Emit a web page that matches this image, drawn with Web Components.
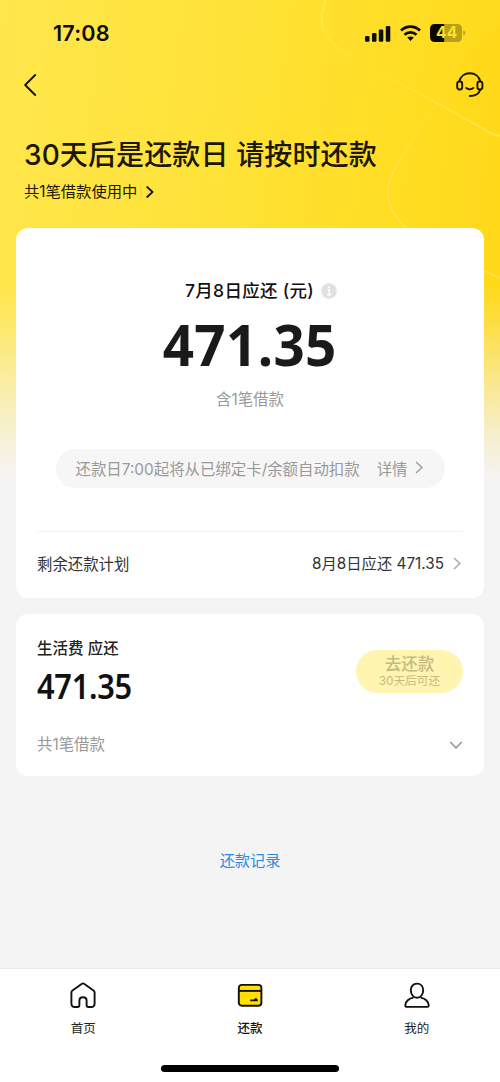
<!DOCTYPE html>
<html lang="zh-CN">
<head>
<meta charset="utf-8">
<title>还款</title>
<style>
html,body{margin:0;padding:0}
body{font-family:Inter,"Noto Sans CJK SC",sans-serif;color:#1a1a1a;background:#f4f4f4}
</style>
</head>
<body>
<repay-page></repay-page>
<script>
const define = (name, html) => {
  const t = document.createElement('template');
  t.innerHTML = html;
  customElements.define(name, class extends HTMLElement {
    constructor() {
      super();
      this.attachShadow({mode: 'open'}).append(t.content.cloneNode(true));
    }
  });
};

define('status-bar', `
<style>
:host{display:flex;height:66px;align-items:center;justify-content:space-between;padding:0 34px 0 53px;box-sizing:border-box;color:#0f0c00}
.time{font-size:21.6px;font-weight:600;line-height:26px;letter-spacing:.2px}
svg{display:block}
.icons{display:flex;align-items:center;gap:9px}
.battery{position:relative;width:36px;height:18px;display:flex}
.battery span{position:absolute;left:6px;top:0;font-size:15.500px;line-height:18.500px;font-weight:700;color:#ffe02a;letter-spacing:.2px}
</style>
<span class="time">17:08</span>
<div class="icons">
<svg width="26" height="17" viewBox="0 0 26 17" fill="#0f0c00"><rect x="0" y="11" width="4.5" height="5.7" rx="1.2"/><rect x="7" y="8" width="4.5" height="8.7" rx="1.2"/><rect x="13.8" y="4.5" width="4.5" height="12.2" rx="1.2"/><rect x="20.8" y="1" width="4.5" height="15.7" rx="1.2"/></svg>
<svg width="21" height="16" viewBox="0 0 21 16" fill="none" stroke="#0f0c00" stroke-width="2.8"><path d="M1 5.6C6.3.4 14.7.4 20 5.6"/><path d="M4.500 9.700c3.400-3.200 8.600-3.200 12 0"/><path d="M7.200 12.600c2-1.600 4.600-1.600 6.600 0L10.500 16z" fill="#0f0c00" stroke="none"/></svg>
<div class="battery">
<svg width="36" height="18" viewBox="0 0 36 18"><path d="M5 0H14.500V18H5Q0 18 0 13V5Q0 0 5 0Z" fill="#0b0800"/><path d="M14.500 0H27Q32 0 32 5V13Q32 18 27 18H14.500Z" fill="#b6a01c"/><path d="M33.300 6.500q2 .8 2 2.500t-2 2.500z" fill="#b6a01c"/></svg>
<span>44</span></div>
</div>`);

define('nav-bar', `
<style>
:host{display:flex;height:38px;align-items:center;justify-content:space-between;padding:0 16px 0 23px;box-sizing:border-box}
svg{display:block}
</style>
<svg width="15" height="24" viewBox="0 0 15 24" fill="none" stroke="#181400" stroke-width="1.9" stroke-linecap="round" stroke-linejoin="round"><path d="M12.200 2L2.200 12l10 10"/></svg>
<svg width="28" height="26" viewBox="0 0 28 26" fill="none" stroke="#181400" stroke-width="1.9" stroke-linecap="round"><rect x="1.200" y="9.500" width="5" height="8" rx="2.200"/><rect x="21.400" y="9.500" width="5" height="8" rx="2.200"/><path d="M3.400 9.300C4.500 4.400 8.600 1.300 13.800 1.300S23.100 4.400 24.200 9.300M24.200 17.700c-1.200 4-4.800 6.300-10.400 6.300M10.200 15.900c1.700 1.900 5.500 1.900 7.200 0"/></svg>`);

define('page-hero', `
<style>
:host{display:block;height:124px;padding:32px 24px 0;box-sizing:border-box;color:#1c1700}
h1{margin:0;font-size:28px;line-height:38px;font-weight:500;white-space:nowrap;letter-spacing:.12px}
p{margin:7px 0 0;display:flex;align-items:center;gap:9px;font-size:15.300px;line-height:22px}
</style>
<h1><slot name="title"></slot></h1>
<p><slot></slot><svg width="8" height="12" viewBox="0 0 8 12" fill="none" stroke="#1c1700" stroke-width="1.800" stroke-linecap="round" stroke-linejoin="round"><path d="M1.200 1l5.300 5-5.300 5"/></svg></p>`);

define('ui-card', `
<style>:host{display:block;background:#fff;border-radius:12px;margin:0 16px 16px;box-sizing:border-box}</style><slot></slot>`);

define('due-summary', `
<style>
:host{display:flex;flex-direction:column;align-items:center;height:303px;box-sizing:border-box;padding-top:50px}
.label{display:flex;align-items:center;gap:7px;font-size:17.500px;line-height:26px;font-weight:500;color:#111;margin-left:22px;white-space:nowrap;letter-spacing:.28px}
.amount{font-family:"Noto Sans",sans-serif;font-weight:700;font-size:57px;line-height:60px;letter-spacing:.4px;transform:scaleX(.96);margin-top:10px;color:#1a1a1a}
.sub{font-size:15.400px;line-height:22px;color:#999;margin-top:15px}
.notice{display:flex;align-items:center;width:389px;height:39px;border-radius:20px;background:#f6f6f6;box-sizing:border-box;margin-top:38px;padding:0 22px 2px 20px;font-size:15.420px;color:#999;white-space:nowrap}
.more{display:flex;align-items:center;gap:7px;margin-left:auto}
</style>
<div class="label"><span>7月8日应还 (元)</span><svg width="16" height="16" viewBox="0 0 16 16"><circle cx="8" cy="8" r="7.800" fill="#e1e1e1"/><path d="M6.500 6.800h1.700v4.700M6 11.800h4.200" stroke="#fff" stroke-width="1.500" fill="none"/><circle cx="8" cy="4.200" r="1" fill="#fff"/></svg></div>
<div class="amount">471.35</div>
<div class="sub">含1笔借款</div>
<div class="notice"><span>还款日7:00起将从已绑定卡/余额自动扣款</span><span class="more">详情<svg width="8" height="13" viewBox="0 0 8 13" fill="none" stroke="#999" stroke-width="1.300"><path d="M1 1l6 5.500L1 12"/></svg></span></div>`);

define('plan-row', `
<style>
:host{display:flex;margin:0 21px;height:67px;box-sizing:border-box;border-top:1px solid #f2f2f2;align-items:center;justify-content:space-between;padding:0 2px 5px 0;font-size:15.400px;color:#333}
.v{display:flex;align-items:center;gap:9px;font-size:15.300px;margin-top:-1px}
svg{position:relative;top:1px}
</style>
<span><slot></slot></span><span class="v"><slot name="value"></slot><svg width="8" height="13" viewBox="0 0 8 13" fill="none" stroke="#aaa" stroke-width="1.500"><path d="M1 1l5.800 5.500L1 12"/></svg></span>`);

define('loan-item', `
<style>
:host{display:flex;flex-direction:column;justify-content:space-between;height:162px;box-sizing:border-box;padding:24px 21px 20px}
.top,.foot{display:flex;justify-content:space-between;align-items:center}
.name{font-size:15.400px;line-height:22px;font-weight:500;color:#222;letter-spacing:.1px}
.num{font-family:"Noto Sans",sans-serif;font-weight:600;font-size:34px;line-height:40px;letter-spacing:-.3px;transform:scaleX(.905);transform-origin:0 50%;margin-top:6px;color:#111}
.btn{width:107px;height:43px;margin-top:-1px;border-radius:22px;background:#fff4b0;display:flex;flex-direction:column;align-items:center;color:#c4bb80}
.btn b{font-size:16.500px;line-height:20px;font-weight:500;margin-top:4px}
.btn i{font-style:normal;font-size:11.700px;line-height:14px}
.foot{font-size:15.400px;line-height:22px;color:#999}
</style>
<div class="top"><div><div class="name">生活费 应还</div><div class="num">471.35</div></div>
<div class="btn"><b>去还款</b><i>30天后可还</i></div></div>
<div class="foot"><span>共1笔借款</span><svg width="14" height="8" viewBox="0 0 14 8" fill="none" stroke="#999" stroke-width="1.600"><path d="M1.200 1L7 6.800l5.800-5.800"/></svg></div>`);

define('tab-item', `
<style>
:host{display:flex;flex:1;flex-direction:column;align-items:center;padding-top:13px;font-size:12.500px;color:#222}
.icon{height:26px}
.txt{line-height:18px;margin-top:12px}
:host([active]) .txt{font-weight:500;color:#111}
</style><div class="icon"><slot name="icon"></slot></div><div class="txt"><slot></slot></div>`);

define('tab-bar', `
<style>
:host{display:flex;flex-direction:column;justify-content:space-between;height:114px;background:#fff;border-top:1px solid #ebebeb;box-sizing:border-box}
.tabs{display:flex}
svg{display:block}
.home{width:178px;height:7px;border-radius:4px;background:#000;margin:0 auto 10px}
</style>
<div class="tabs">
<tab-item><svg slot="icon" width="26" height="26" viewBox="0 0 26 26" fill="none" stroke="#111" stroke-width="1.900" stroke-linejoin="round"><path d="M11.600 1.900Q13 .9 14.400 1.900L23.500 8.500Q24.600 9.300 24.600 10.600V21.500Q24.600 25 21.200 25H18.500Q16.600 25 16.600 23V18.300Q16.600 15.300 13 15.300T9.400 18.300V23Q9.400 25 7.500 25H4.800Q1.400 25 1.400 21.500V10.600Q1.400 9.300 2.500 8.500Z"/></svg>首页</tab-item>
<tab-item active><svg slot="icon" width="26" height="26" viewBox="0 0 26 26" fill="#ffe000" stroke="#111" stroke-width="1.900"><rect x="1.800" y="2.900" width="22.600" height="20.900" rx="3"/><path d="M2 8.900h22.300"/><path d="M13.200 17.500h3.700l2.300-2 .5 1.600 1 .4v1.700h-7.500z" fill="#111" stroke="none"/></svg>还款</tab-item>
<tab-item><svg slot="icon" width="26" height="26" viewBox="0 0 26 26" fill="none" stroke="#111" stroke-width="1.900"><path d="M13 1.600c4 0 6.200 2.900 6.200 6.600 0 4.100-2.500 7.600-6.200 7.600s-6.200-3.500-6.200-7.600C6.800 4.500 9 1.600 13 1.600Z"/><path d="M9.500 15.600C5 16.200 1.500 19.400 1.300 23c-.1 1.300.6 1.900 2 1.900h19.400c1.400 0 2.100-.6 2-1.900-.2-3.600-3.700-6.800-8.200-7.400"/></svg>我的</tab-item>
</div>
<div class="home"></div>`);

define('repay-page', `
<style>
:host{display:flex;flex-direction:column;position:relative;z-index:0;width:500px;height:1082px;overflow:hidden;background:#f4f4f4}
.bg{position:absolute;z-index:-1;left:0;top:0;width:500px;height:490px;background:
linear-gradient(180deg,rgba(244,244,244,0) 285px,rgba(244,244,244,.2) 325px,rgba(244,244,244,.55) 385px,rgba(244,244,244,.82) 435px,#f4f4f4 478px),
linear-gradient(98deg,#ffe74d 0%,#ffe339 40%,#ffdd22 75%,#ffd817 100%)}
.bg svg{display:block}
.link{margin:58px auto 0;font-size:15.200px;line-height:22px;color:#2b8be0}
tab-bar{margin-top:auto}
</style>
<div class="bg"><svg width="500" height="300" viewBox="0 0 500 300" fill="none"><defs>
<linearGradient id="a" x1="320" y1="0" x2="500" y2="137" gradientUnits="userSpaceOnUse"><stop stop-color="#fff17a" stop-opacity=".45"/><stop offset=".35" stop-color="#fff17a" stop-opacity=".05"/><stop offset="1" stop-color="#fff17a" stop-opacity=".6"/></linearGradient>
<linearGradient id="b" x1="500" y1="25" x2="387" y2="200" gradientUnits="userSpaceOnUse"><stop stop-color="#ffe95a" stop-opacity=".08"/><stop offset=".5" stop-color="#ffe95a" stop-opacity=".12"/><stop offset="1" stop-color="#fff07a" stop-opacity=".5"/></linearGradient>
<linearGradient id="c" x1="500" y1="40" x2="430" y2="110" gradientUnits="userSpaceOnUse"><stop stop-color="#ffd000" stop-opacity=".12"/><stop offset="1" stop-color="#ffd000" stop-opacity="0.02"/></linearGradient></defs>
<path d="M500 25Q477 33 463 55L438 102 484 129Q492 135 500 136Z" fill="url(#c)"/>
<path d="M326 0C318 20 321 34 337 47C348 56 390 79 415 91L484 129Q492 135 500 136" stroke="url(#a)" stroke-width="1.700"/>
<path d="M500 25Q477 33 463 55C452 76 442 98 427 118Q412 139 397 165C382 188 386 209 406 228L480 269 500 278" stroke="url(#b)" stroke-width="1.700"/></svg></div>
<status-bar></status-bar>
<nav-bar></nav-bar>
<page-hero><span slot="title">30天后是还款日 请按时还款</span>共1笔借款使用中</page-hero>
<ui-card><due-summary></due-summary><plan-row>剩余还款计划<span slot="value">8月8日应还 471.35</span></plan-row></ui-card>
<ui-card><loan-item></loan-item></ui-card>
<div class="link">还款记录</div>
<tab-bar></tab-bar>`);
</script>
</body>
</html>
